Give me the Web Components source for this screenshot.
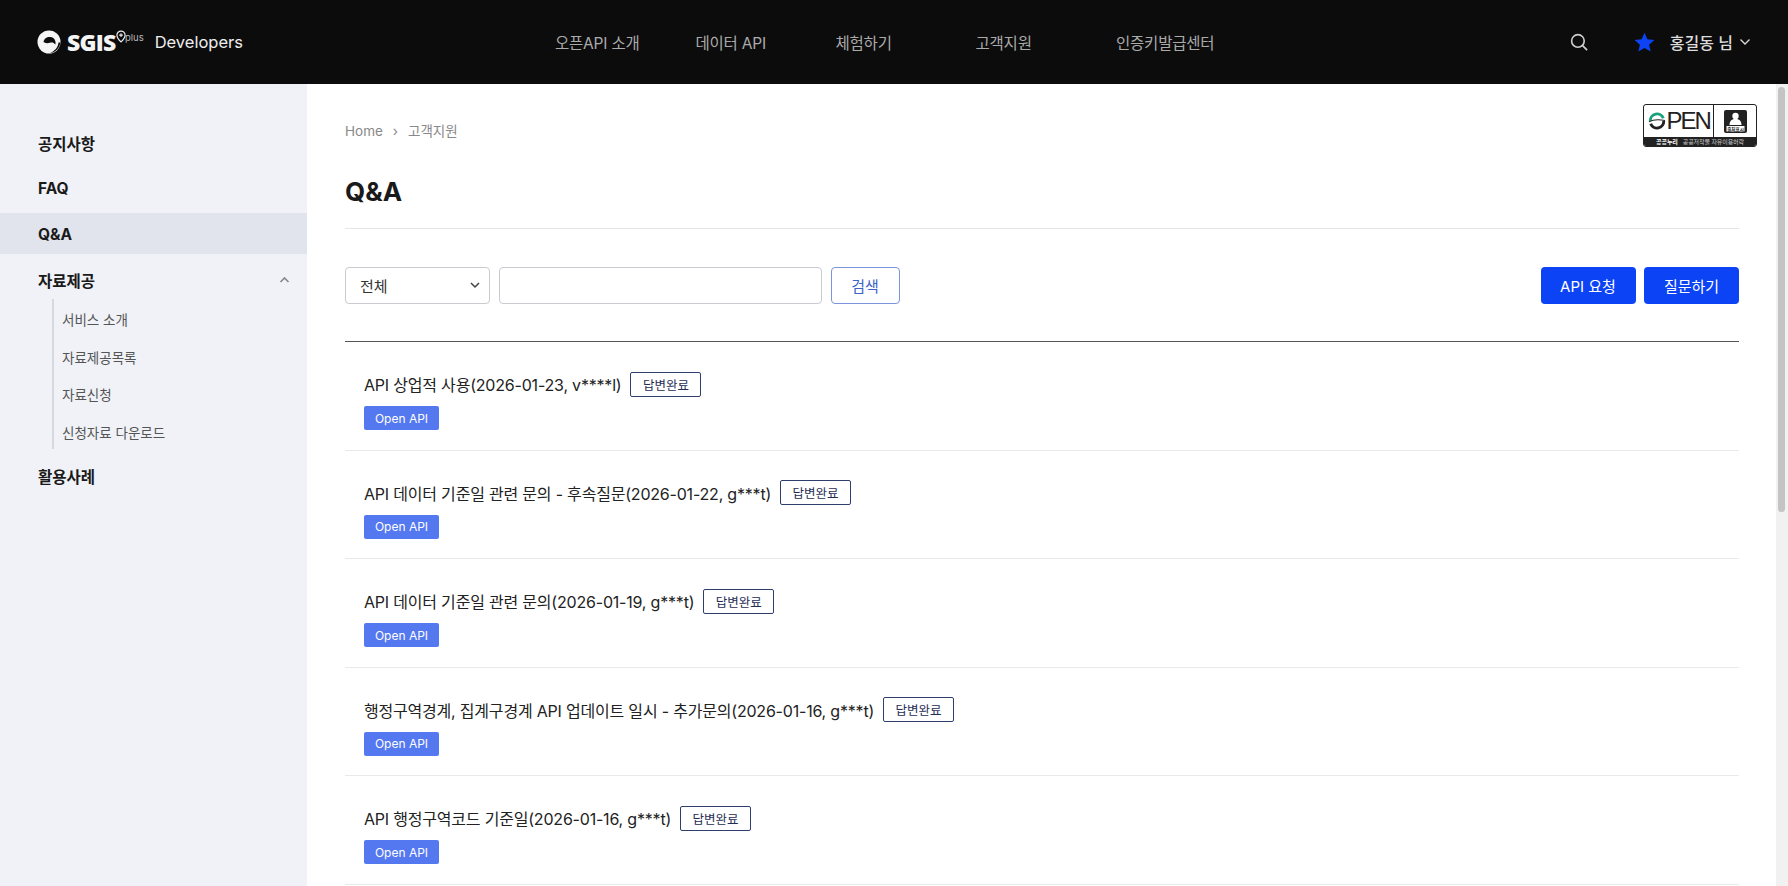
<!DOCTYPE html>
<html lang="ko"><head><meta charset="utf-8"><style>
html,body{margin:0;height:100%;overflow:hidden;background:#fff}
body{font-family:Inter,"Noto Sans CJK KR",sans-serif;color:#111}
#app{display:flex;flex-direction:column;height:886px;overflow:hidden}
#below{display:flex;flex:1;min-height:0}
</style></head><body>
<template id="t-header"><style>
:host{display:flex;align-items:center;height:84px;background:#0c0c0d;color:#fff;flex:none;position:relative;box-sizing:border-box}
.logo{display:flex;align-items:center;margin-left:37px;width:518px;flex:none}
.sgis{font:800 23px "Open Sans","Noto Sans CJK KR",sans-serif;letter-spacing:-.8px;margin-left:6px;color:#f4f4f4}
.plus{font:9.500px Inter,sans-serif;color:#bbb;align-self:flex-start;margin:6px 0 0 -1.500px}
.dev{font:400 16.500px Inter,sans-serif;color:#eee;margin-left:11px}
.logo>*{flex:none}
nav{display:flex;font-size:15.500px;color:#aaa;letter-spacing:-.2px}
nav span{display:block;white-space:nowrap}
.r{margin-left:auto;display:flex;align-items:center;margin-right:37px;color:#ddd;font-size:16px}
.name{margin:0 6px 0 15px;font-weight:500}
</style>
<div class="logo">
<svg width="24" height="24" viewBox="0 0 24 24"><circle cx="12" cy="12" r="11.500" fill="#f4f4f4"/><path d="M6.500 12C7 8.500 10.200 6.500 13.500 7 17.200 7.500 19.200 10.800 18.400 14.500 16.800 12.300 14.800 12 12.800 12.800 10.800 13.600 8.600 13.200 6.500 12z" fill="#0c0c0d"/><path d="M23.300 12.500C22.800 18 18.500 22.500 13 23 17.800 21 21 17.500 21.500 12.500z" fill="#0c0c0d"/></svg>
<span class="sgis">SGIS</span>
<svg width="10" height="13" viewBox="0 0 11 14" style="align-self:flex-start;margin:4px 0 0 1px"><path d="M5.500 1a4.500 4.500 0 0 1 4.500 4.500c0 3-4.500 7.500-4.500 7.500S1 8.500 1 5.500A4.500 4.500 0 0 1 5.500 1z" fill="none" stroke="#eee" stroke-width="1.300"/><path d="M3.500 5.500h4M5.500 3.500v4" stroke="#eee" stroke-width="1.200"/></svg>
<span class="plus">plus</span><span class="dev">Developers</span></div>
<nav><span style="width:140.500px">오픈API 소개</span><span style="width:140px">데이터 API</span><span style="width:140px">체험하기</span><span style="width:140.500px">고객지원</span><span>인증키발급센터</span></nav>
<div class="r">
<svg width="18" height="18" viewBox="0 0 20 20" fill="none" stroke="#cfcfcf" stroke-width="1.800"><circle cx="8.800" cy="8.800" r="7"/><path d="M14 14l5 5"/></svg>
<svg width="21" height="20" viewBox="0 0 22 21" style="margin-left:46px"><path d="M11 .8l3 6.900 7.400.7-5.600 4.900 1.700 7.300L11 16.800l-6.500 3.800 1.700-7.300L.6 8.400 8 7.700z" fill="#0c43f5"/></svg>
<span class="name">홍길동 님</span>
<svg width="12" height="8" viewBox="0 0 12 8" fill="none" stroke="#ddd" stroke-width="1.300"><path d="M1.500 1.500L6 6l4.500-4.500"/></svg>
</div></template>

<template id="t-side"><style>
:host{display:block;width:307px;flex:none;background:#f0f2f7;padding-top:37px;box-sizing:border-box}
</style><slot></slot></template>

<template id="t-item"><style>
:host{display:flex;align-items:center;height:41px;padding:2px 17px 0 38px;font-size:15.500px;font-weight:700;color:#1a1a1a;box-sizing:border-box;margin-bottom:4.800px}
:host([active]){background:#e1e4ec}
svg{margin-left:auto}
</style><slot></slot><svg width="11" height="8" viewBox="0 0 11 8" fill="none" stroke="#888" stroke-width="1.600" style="display:none"><path d="M1.500 6L5.500 2l4 4"/></svg></template>

<template id="t-sub"><style>
:host{display:block;margin:-5px 0 5.500px 52px;border-left:2px solid #d6d8de;padding-left:8px;height:150px;font-size:13.500px;color:#555}
div{height:37.400px;display:flex;align-items:center;padding-top:3px;box-sizing:border-box}
</style><div>서비스 소개</div><div>자료제공목록</div><div>자료신청</div><div>신청자료 다운로드</div></template>

<template id="t-badge"><style>
:host{display:flex;flex-direction:column;width:114px;height:43px;box-sizing:border-box;border:1.500px solid #222;border-radius:3px;overflow:hidden;flex:none;background:#fff}
.t{display:flex;flex:1;min-height:0}
.o{flex:1;display:flex;align-items:center;padding-left:4px;font:400 24px "Liberation Sans",sans-serif;letter-spacing:-2px;color:#222;border-right:1.500px solid #222}
.p{width:42px;display:flex;align-items:center;justify-content:center;flex:none}
.b{height:9px;background:#222;color:#cfcfcf;font-size:6px;line-height:9px;text-align:center;white-space:nowrap;letter-spacing:-.1px;flex:none}
b{font-weight:700;color:#fff;margin-right:5px}
svg{flex:none}
</style>
<div class="t"><div class="o"><svg width="18" height="18" viewBox="0 0 20 20" style="margin-right:.5px"><path d="M2.500 10a7.500 7.500 0 0 1 14.500-3" fill="none" stroke="#17a27c" stroke-width="3.200"/><path d="M17.500 10a7.500 7.500 0 0 1-14.500 3" fill="none" stroke="#222" stroke-width="3.200"/><path d="M1 11c5-3 11-3 18-1.500" fill="none" stroke="#222" stroke-width="1.200"/></svg>PEN</div>
<div class="p"><svg width="23" height="23" viewBox="0 0 23 23"><rect width="23" height="23" rx="2" fill="#222"/><circle cx="11.500" cy="6" r="3.200" fill="#fff"/><path d="M5.500 15c0-4 2.500-6.200 6-6.200s6 2.200 6 6.200z" fill="#fff"/><rect x="2.500" y="16" width="18" height="5.500" fill="#fff"/><text x="11.500" y="20.500" text-anchor="middle" font-size="4.500" font-family="Noto Sans CJK KR" font-weight="700" fill="#222">출처표시</text></svg></div></div>
<div class="b"><b>공공누리</b>공공저작물 자유이용허락</div></template>

<template id="t-row"><style>
:host{display:flex;flex-direction:column;align-items:flex-start;box-sizing:border-box;height:108.600px;padding:29px 0 0 19px;border-bottom:1px solid #e8e9ec}
.l{display:flex;align-items:center;font-size:16px;color:#222;height:26px;white-space:nowrap;letter-spacing:-.2px}
.s{margin-left:9px;height:25px;width:71px;box-sizing:border-box;border:1px solid #2e3f6e;border-radius:2px;font-size:12.500px;letter-spacing:0;color:#1f2d55;display:flex;align-items:center;justify-content:center}
.k{margin-top:9px;height:24px;width:75px;background:#5478f0;border-radius:2px;color:#fff;font-size:12px;display:flex;align-items:center;justify-content:center}
</style><div class="l"><slot></slot><span class="s">답변완료</span></div><div class="k">Open API</div></template>

<template id="t-main"><style>
:host{display:block;flex:1;min-width:0;padding:0 37px 0 38px;box-sizing:border-box;overflow:hidden;background:#fff}
.top{display:flex;justify-content:space-between;align-items:flex-start;padding-top:20px;height:84px;box-sizing:border-box}
.cr{margin-top:17px;font-size:13.500px;line-height:20px;color:#888;display:flex;gap:10px}
.tt{margin-right:-18px}
h1{margin:0;font-size:26px;font-weight:700;color:#1a1a1a;height:60px;line-height:48px;border-bottom:1px solid #e4e5e8}
.f{display:flex;gap:8.500px;margin-top:38px;height:37px}
.sel{width:145px;box-sizing:border-box;border:1px solid #c9cbd0;border-radius:4px;display:flex;align-items:center;padding:0 9px 0 14px;font-size:15px;color:#333;justify-content:space-between}
.inp{width:323px;box-sizing:border-box;border:1px solid #c9cbd0;border-radius:4px}
.go{width:69px;margin-left:.5px;box-sizing:border-box;border:1px solid #7a95dd;border-radius:4px;color:#3d63c8;font-size:15px;display:flex;align-items:center;justify-content:center}
.a{height:37px;width:95px;background:#0c43f5;color:#fff;border-radius:4px;font-size:15px;display:flex;align-items:center;justify-content:center}
.sp{flex:1}
.list{margin-top:37px;border-top:1px solid #555}
</style>
<div class="top"><div class="cr"><span>Home</span><span>›</span><span>고객지원</span></div><open-badge class="tt"></open-badge></div>
<h1>Q&amp;A</h1>
<div class="f"><div class="sel">전체<svg width="10" height="7" viewBox="0 0 10 7" fill="none" stroke="#444" stroke-width="1.500"><path d="M1 1l4 4 4-4"/></svg></div><div class="inp"></div><div class="go">검색</div><div class="sp"></div><div class="a">API 요청</div><div class="a">질문하기</div></div>
<div class="list"><slot></slot></div></template>

<template id="t-sb"><style>
:host{display:block;width:12px;flex:none;background:#f1f1f1;padding:3px 3px 0 2px;box-sizing:border-box}
div{height:425px;background:#c4c4c4;border-radius:4px}
</style><div></div></template>

<div id="app">
<app-header></app-header>
<div id="below">
<side-nav>
<side-item>공지사항</side-item>
<side-item>FAQ</side-item>
<side-item active>Q&amp;A</side-item>
<side-item open>자료제공</side-item>
<side-sub></side-sub>
<side-item>활용사례</side-item>
</side-nav>
<qa-main>
<qa-row>API 상업적 사용(2026-01-23, v****l)</qa-row>
<qa-row>API 데이터 기준일 관련 문의 - 후속질문(2026-01-22, g***t)</qa-row>
<qa-row>API 데이터 기준일 관련 문의(2026-01-19, g***t)</qa-row>
<qa-row>행정구역경계, 집계구경계 API 업데이트 일시 - 추가문의(2026-01-16, g***t)</qa-row>
<qa-row>API 행정구역코드 기준일(2026-01-16, g***t)</qa-row>
</qa-main>
<fake-scroll></fake-scroll>
</div></div>
<script>
const def=(n,t,extra)=>customElements.define(n,class extends HTMLElement{constructor(){super();this.attachShadow({mode:'open'}).append(document.getElementById(t).content.cloneNode(true));}connectedCallback(){extra&&extra(this)}});
def('app-header','t-header');
def('side-nav','t-side');
def('side-item','t-item',e=>{if(e.hasAttribute('open'))e.shadowRoot.querySelector('svg').style.display='block'});
def('side-sub','t-sub');
def('open-badge','t-badge');
def('qa-row','t-row');
def('qa-main','t-main');
def('fake-scroll','t-sb');
</script></body></html>
